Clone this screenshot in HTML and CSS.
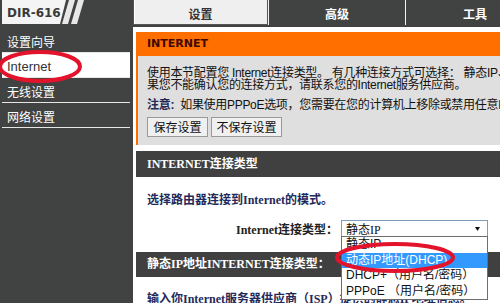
FILE: index.html
```html
<!DOCTYPE html>
<html lang="zh-CN">
<head>
<meta charset="utf-8">
<title>DIR-616 Internet</title>
<link rel="stylesheet" href="styles.css">
</head>
<body>
<div class="page">
  <header class="top">
    <div class="logo">
      <svg width="133" height="25" viewBox="0 0 133 25">
        <polygon points="2,0 66,0 60,24 2,24" fill="#f4f4f4"/>
        <polygon points="69,0 75,0 68,24 62,24" fill="#e8e8e8"/>
        <polygon points="78,0 84,0 77,24 71,24" fill="#e8e8e8"/>
        <text x="7" y="17" class="logo-text">DIR-616</text>
      </svg>
    </div>
    <nav class="tabs">
      <div class="tab tab-active">设置</div>
      <div class="tab tab-mid">高级</div>
      <div class="tab tab-last">工具</div>
    </nav>
  </header>
  <div class="main">
    <aside class="sidebar">
      <ul class="menu">
        <li class="menu-item">设置向导</li>
        <li class="menu-item menu-active">Internet</li>
        <li class="menu-item">无线设置</li>
        <li class="menu-item">网络设置</li>
      </ul>
    </aside>
    <section class="content">
      <div class="box">
        <h2 class="box-title">INTERNET</h2>
        <div class="box-body">
          <p class="intro">使用本节配置您 Internet连接类型。 有几种连接方式可选择： 静态IP、动态IP、PPPoE、PPTP和L2TP。如<br>果您不能确认您的连接方式，请联系您的Internet服务供应商。</p>
          <p class="note"><strong class="note-key">注意:</strong>&nbsp; 如果使用PPPoE选项，您需要在您的计算机上移除或禁用任意PPPoE客户端软件。</p>
          <div class="buttons">
            <button class="btn btn-save">保存设置</button>
            <button class="btn btn-nosave">不保存设置</button>
          </div>
        </div>
      </div>
      <div class="section">
        <h3 class="section-title">INTERNET连接类型</h3>
        <div class="section-body">
          <p class="lead">选择路由器连接到Internet的模式。</p>
          <div class="field">
            <label class="field-label">Internet连接类型：</label>
            <div class="select">
              <span class="select-value">静态IP</span>
              <svg class="select-arrow" width="5" height="4" viewBox="0 0 5 4"><polygon points="0,0 5,0 2.5,4" fill="#111"/></svg>
              <ul class="options">
                <li class="option">静态IP</li>
                <li class="option option-selected">动态IP地址(DHCP)</li>
                <li class="option">DHCP+（用户名/密码）</li>
                <li class="option">PPPoE （用户名/密码）</li>
              </ul>
            </div>
          </div>
        </div>
      </div>
      <div class="section section-static">
        <h3 class="section-title section-title-2">静态IP地址INTERNET连接类型：</h3>
        <div class="section-body section-body-2">
          <p class="lead">输入你Internet服务器供应商（ISP）提供的静态IP地址信息。</p>
        </div>
      </div>
    </section>
  </div>
  <svg class="annotations" width="500" height="303" viewBox="0 0 500 303">
    <ellipse cx="40" cy="66.5" rx="40" ry="14.5" fill="none" stroke="#e3132b" stroke-width="4"/>
    <ellipse cx="395" cy="257.5" rx="58" ry="13.5" fill="none" stroke="#e3132b" stroke-width="4"/>
  </svg>
</div>
</body>
</html>
```
FILE: styles.css
```css
* { box-sizing: border-box; }
html, body { margin: 0; padding: 0; }
body {
  background: #404342;
  font-family: "Liberation Sans", "Noto Sans CJK SC", sans-serif;
  font-size: 12px;
}
.page {
  position: relative;
  width: 500px;
  height: 303px;
  overflow: hidden;
  background: #404342;
}

/* top bar */
.top { display: flex; height: 27px; }
.logo { width: 133px; height: 25px; flex: none; }
.logo svg { display: block; }
.logo-text {
  font-family: "DejaVu Sans", sans-serif;
  font-weight: bold;
  font-size: 12px;
  fill: #3a3a3a;
}
.tabs { display: flex; height: 25px; flex: none; }
.tab {
  height: 25px;
  padding-top: 2px;
  line-height: 23px;
  text-align: center;
  font-family: "Noto Sans CJK SC", sans-serif;
  font-weight: bold;
  font-size: 12px;
  color: #fff;
}
.tab-active {
  width: 135px;
  background: #efefef;
  color: #333;
  border: 1px solid #555;
  border-top: none;
  box-shadow: inset 1px 0 0 #fff;
}
.tab-mid { width: 137px; border-left: 1px solid #f2f2f2; }
.tab-last { width: 139px; border-left: 1px solid #f2f2f2; }

/* main */
.main { display: flex; height: 276px; }
.sidebar { width: 133px; flex: none; padding-top: 1px; }
.menu { list-style: none; margin: 0; padding: 0 3px 0 2px; }
.menu-item {
  height: 25px;
  padding: 2px 0 0 5px;
  line-height: 24px;
  border-bottom: 1px solid #e6e6e6;
  color: #fff;
  font-family: "Noto Sans CJK SC", sans-serif;
  font-size: 12px;
  white-space: nowrap;
}
.menu-active {
  background: #fff;
  color: #333;
  font-family: "Liberation Sans", sans-serif;
  font-size: 13px;
}

.content {
  flex: 1;
  min-width: 0;
  background: #fff;
  padding: 5px 0 0 3px;
  overflow: hidden;
  white-space: nowrap;
}

/* INTERNET box */
.box-title {
  margin: 0;
  height: 24px;
  line-height: 24px;
  padding-left: 11px;
  background: #ff6f00;
  color: #3d0800;
  font-family: "DejaVu Sans", sans-serif;
  font-weight: bold;
  font-size: 11px;
}
.box-body {
  background: #dfdfdf;
  border-left: 2px solid #ff6f00;
  padding: 11px 0 8px 9px;
  color: #111;
}
.intro { margin: 0; line-height: 12px; font-size: 12px; letter-spacing: -0.3px; }
.note { margin: 8px 0 0; line-height: 12px; font-size: 12px; letter-spacing: -0.3px; }
.note-key { color: #1f2a55; }
.buttons { display: flex; gap: 3px; margin-top: 6px; }
.btn {
  height: 20px;
  padding: 0;
  margin: 0;
  background: #f0f0f0;
  border: 1px solid #9a9a9a;
  border-radius: 0;
  font-family: "Noto Sans CJK SC", sans-serif;
  font-size: 12px;
  line-height: 18px;
  color: #111;
}
.btn-save { width: 61px; }
.btn-nosave { width: 71px; }

/* sections */
.section { margin-top: 6px; }
.section-static { margin-top: 0; }
.section-title {
  margin: 0;
  height: 26px;
  line-height: 26px;
  padding-left: 11px;
  background: #404040;
  color: #fff;
  font-family: "Liberation Serif", "Noto Sans CJK SC", serif;
  font-weight: bold;
  font-size: 12px;
}
.section-title-2 { height: 25px; line-height: 25px; }
.section-body { padding: 16px 0 15px; }
.section-body-2 { padding-top: 15px; }
.lead {
  margin: 0;
  padding-left: 11px;
  line-height: 14px;
  color: #1f2a5a;
  font-family: "Liberation Serif", "Noto Sans CJK SC", serif;
  font-weight: bold;
  font-size: 12px;
}
.field { display: flex; align-items: center; height: 17px; margin-top: 13px; }
.field-label {
  width: 202px;
  flex: none;
  text-align: right;
  color: #222;
  font-family: "Liberation Serif", "Noto Sans CJK SC", serif;
  font-weight: bold;
  font-size: 12px;
}
.select {
  position: relative;
  display: flex;
  align-items: center;
  margin-left: 3px;
  width: 147px;
  height: 17px;
  padding-left: 4px;
  border: 1px solid #7f9db9;
  background: #fff;
}
.select-value {
  flex: 1;
  font-family: "Liberation Serif", "Noto Sans CJK SC", serif;
  font-size: 12px;
  color: #111;
}
.select-arrow { margin-right: 7px; }
.options {
  position: absolute;
  left: -1px;
  top: 100%;
  width: 147px;
  margin: 0;
  padding: 0;
  list-style: none;
  background: #fff;
  border: 1px solid #6e6e6e;
  z-index: 2;
}
.option {
  height: 15.5px;
  line-height: 15.5px;
  padding-left: 4px;
  font-size: 12px;
  color: #111;
}
.option-selected { background: #3399ff; color: #fff; }

.annotations {
  position: absolute;
  left: 0;
  top: 0;
  pointer-events: none;
  z-index: 5;
}
```
